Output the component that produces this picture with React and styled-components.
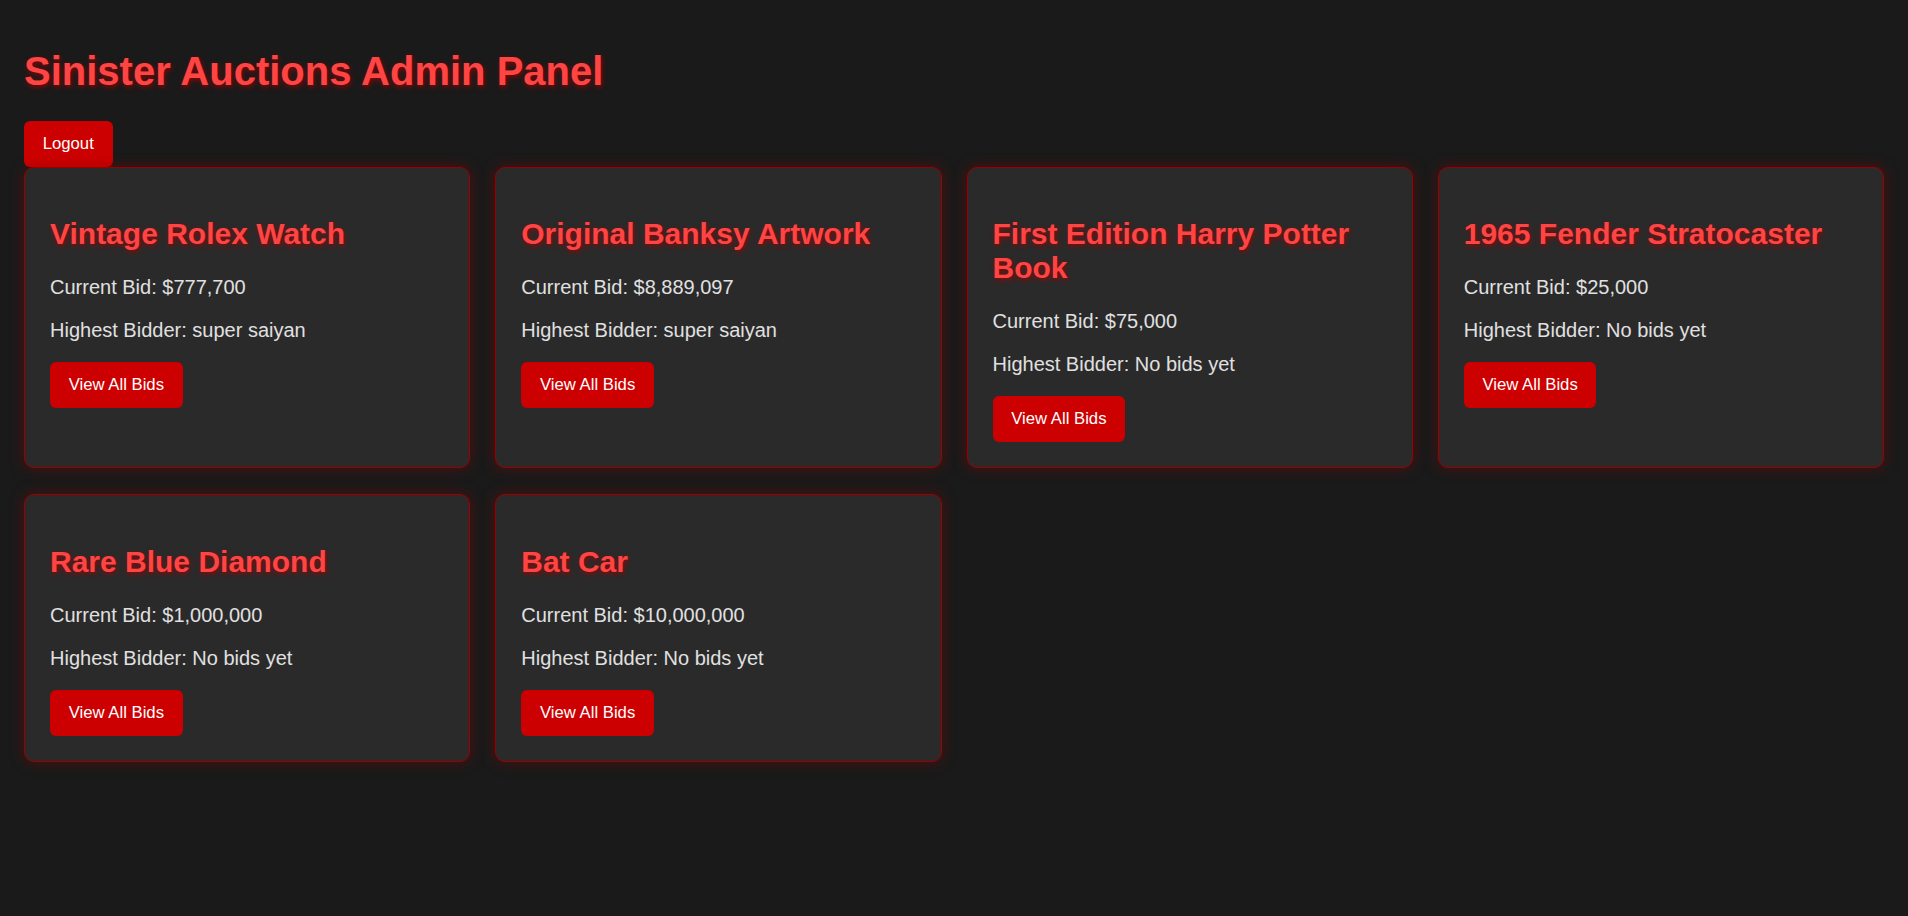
import React from 'react';
import styled, { createGlobalStyle } from 'styled-components';

const GlobalStyle = createGlobalStyle`
  html, body {
    margin: 0;
    background: #1a1a1a;
  }
  body {
    font-family: 'Liberation Sans', Arial, sans-serif;
    color: #e0e0e0;
  }
`;

const Page = styled.div`
  padding: 22px 24px;
  min-height: 916px;
  box-sizing: border-box;
`;

const Title = styled.h1`
  font-size: 40px;
  font-weight: bold;
  margin: 26.8px 0;
  line-height: normal;
  color: #ff4444;
  text-shadow: 1px 2px 5px rgba(160, 0, 0, 0.85);
`;

const RedButton = styled.button`
  display: block;
  font-family: 'Liberation Sans', Arial, sans-serif;
  font-size: 16.7px;
  line-height: normal;
  padding: 13px 18.75px;
  border: none;
  border-radius: 6px;
  background: #cc0000;
  color: #ffffff;
  cursor: pointer;
`;

const Grid = styled.div`
  display: grid;
  grid-template-columns: repeat(4, 1fr);
  gap: 26px 25px;
`;

const Card = styled.div`
  background: #2a2a2a;
  border: 1.5px solid #9a0000;
  border-radius: 10px;
  padding: 25px;
  box-shadow: 0 0 14px rgba(139, 0, 0, 0.5);
`;

const ItemName = styled.h2`
  font-size: 30px;
  font-weight: bold;
  line-height: normal;
  margin: 24.9px 0;
  color: #ff4444;
  text-shadow: 1px 2px 5px rgba(160, 0, 0, 0.85);
`;

const Info = styled.p`
  font-size: 20px;
  line-height: normal;
  margin: 20px 0;
  color: #e0e0e0;
`;

const auctions = [
  { name: 'Vintage Rolex Watch', bid: 777700, bidder: 'super saiyan' },
  { name: 'Original Banksy Artwork', bid: 8889097, bidder: 'super saiyan' },
  { name: 'First Edition Harry Potter Book', bid: 75000, bidder: null },
  { name: '1965 Fender Stratocaster', bid: 25000, bidder: null },
  { name: 'Rare Blue Diamond', bid: 1000000, bidder: null },
  { name: 'Bat Car', bid: 10000000, bidder: null },
];

export default function App() {
  return (
    <>
      <GlobalStyle />
      <Page>
        <Title>Sinister Auctions Admin Panel</Title>
        <RedButton type="button">Logout</RedButton>
        <Grid>
          {auctions.map((item) => (
            <Card key={item.name}>
              <ItemName>{item.name}</ItemName>
              <Info>Current Bid: ${item.bid.toLocaleString('en-US')}</Info>
              <Info>Highest Bidder: {item.bidder || 'No bids yet'}</Info>
              <RedButton type="button">View All Bids</RedButton>
            </Card>
          ))}
        </Grid>
      </Page>
    </>
  );
}
